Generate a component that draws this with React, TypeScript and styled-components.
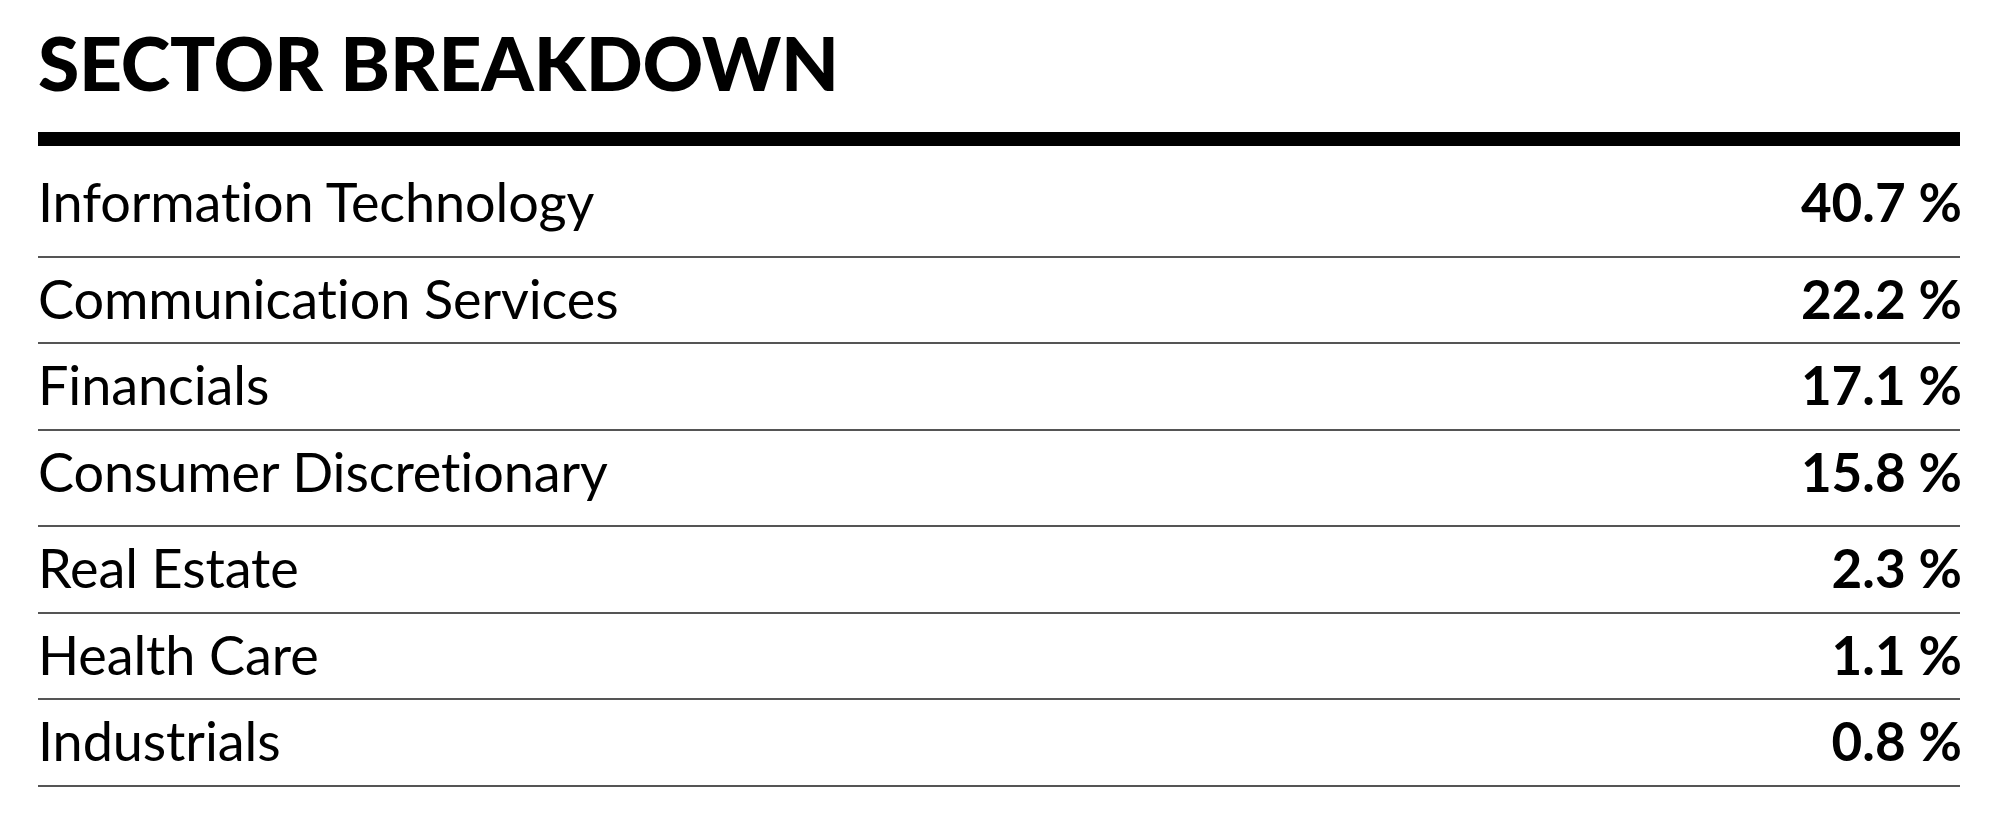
import React from "react";
import styled, {createGlobalStyle} from 'styled-components'

const GlobalStyle = createGlobalStyle`
html, body {
margin: 0;
padding: 0;
background: #fff;
}
body {
font-family: Lato, "Noto Sans", sans-serif;
color: #000;
font-variant-ligatures: none;
}
`

export const Page = styled.div`
padding: 25px 38px 0 38px;
`

export const Title = styled.h1`
margin: 0;
font-family: Lato, sans-serif;
font-weight: 900;
font-size: 75px;
line-height: 75px;
letter-spacing: -0.2px;
text-transform: uppercase;
`

export const Bar = styled.div`
height: 14px;
background: #000;
margin-top: 32px;
`

export const Table = styled.div`
display: flex;
flex-direction: column;
`

export const Row = styled.div<{ $descender?: boolean; $first?: boolean }>`
display: flex;
justify-content: space-between;
align-items: baseline;
padding-top: ${props => props.$first ? 29 : 14}px;
padding-bottom: ${props => props.$descender ? 27.5 : 17.5}px;
border-bottom: 2px solid #555;
font-size: 54px;
line-height: 53px;
`

export const Label = styled.span`
font-weight: 400;
letter-spacing: -0.1px;
`

export const Value = styled.span`
font-weight: 700;
font-size: 53px;
margin-right: -2px;
`

type SectorT = {
    name: string
    weight: string
    descender?: boolean
}

const sectors: Array<SectorT> = [
    {name: 'Information Technology', weight: '40.7 %', descender: true},
    {name: 'Communication Services', weight: '22.2 %'},
    {name: 'Financials', weight: '17.1 %'},
    {name: 'Consumer Discretionary', weight: '15.8 %', descender: true},
    {name: 'Real Estate', weight: '2.3 %'},
    {name: 'Health Care', weight: '1.1 %'},
    {name: 'Industrials', weight: '0.8 %'},
]

const App: React.FC = () => {
    return <>
        <GlobalStyle/>
        <Page>
            <Title>Sector Breakdown</Title>
            <Bar/>
            <Table>
                {sectors.map((s, i) => <Row key={s.name} $first={i === 0} $descender={s.descender}>
                    <Label>{s.name}</Label>
                    <Value>{s.weight}</Value>
                </Row>)}
            </Table>
        </Page>
    </>
}

export default App
